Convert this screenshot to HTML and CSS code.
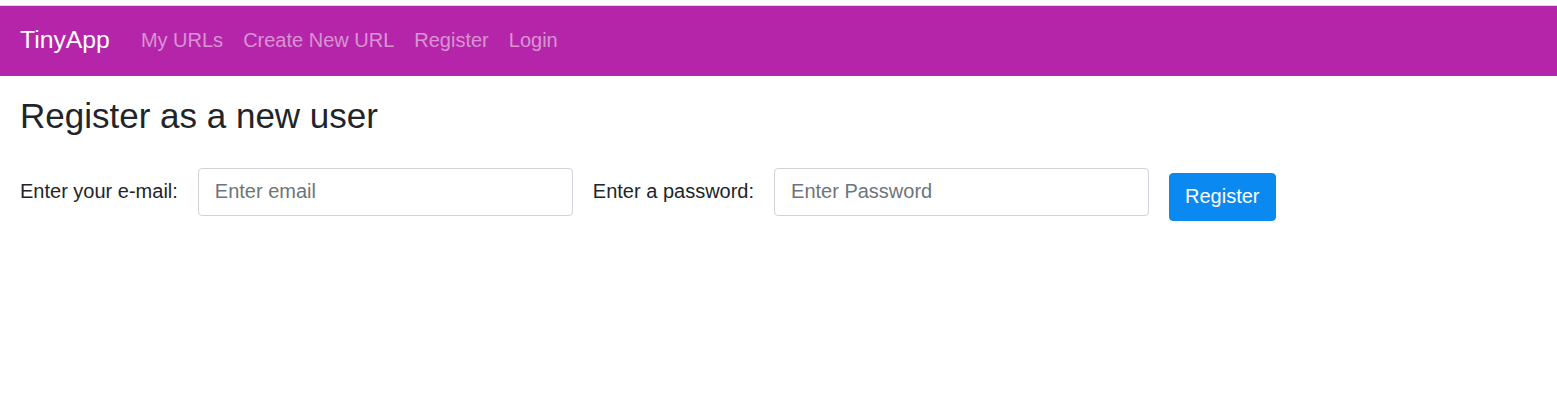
FILE: index.html
```html
<!DOCTYPE html>
<html lang="en">
<head>
<meta charset="utf-8">
<title>TinyApp</title>
<link rel="stylesheet" href="styles.css">
</head>
<body>
<nav class="navbar">
  <a class="brand" href="#">TinyApp</a>
  <ul class="nav">
    <li><a class="nav-link" href="#">My URLs</a></li>
    <li><a class="nav-link" href="#">Create New URL</a></li>
    <li><a class="nav-link" href="#">Register</a></li>
    <li><a class="nav-link" href="#">Login</a></li>
  </ul>
</nav>
<main class="content">
  <h2 class="title">Register as a new user</h2>
  <form class="form-inline">
    <label class="label" for="email">Enter your e-mail:</label>
    <input class="input" id="email" type="text" placeholder="Enter email">
    <label class="label" for="password">Enter a password:</label>
    <input class="input" id="password" type="password" placeholder="Enter Password">
    <button class="btn" type="button">Register</button>
  </form>
</main>
</body>
</html>
```

FILE: styles.css
```css
* { box-sizing: border-box; }
html, body {
  margin: 0;
  padding: 0;
  background: #fff;
}
body {
  font-family: "Liberation Sans", Arial, sans-serif;
  color: #212529;
  padding-top: 5px;
}
.navbar {
  display: flex;
  align-items: center;
  height: 71px;
  padding: 0 20px 2px;
  background: #b425aa;
  border-top: 1px solid #d9d9d9;
}
.brand {
  font-size: 24.75px;
  line-height: 30px;
  color: #fff;
  text-decoration: none;
  margin-right: 21px;
}
.nav {
  display: flex;
  list-style: none;
  margin: 0;
  padding: 0;
}
.nav-link {
  display: block;
  font-size: 20px;
  line-height: 30px;
  padding: 0 10px;
  color: rgba(255, 255, 255, 0.5);
  text-decoration: none;
}
.content {
  padding: 0 20px;
}
.title {
  font-size: 35px;
  font-weight: 400;
  line-height: 42px;
  margin: 19px 0 31px;
}
.form-inline {
  display: flex;
  align-items: flex-start;
}
.label {
  font-size: 20px;
  line-height: 30px;
  margin: 8px 20px 0 0;
}
.input {
  width: 375px;
  height: 48px;
  padding: 7px 16px 9px;
  font-family: inherit;
  font-size: 20px;
  line-height: 30px;
  color: #495057;
  border: 1px solid #ced4da;
  border-radius: 4px;
  margin-right: 20px;
}
.input::placeholder {
  color: #6c757d;
  opacity: 1;
}
.btn {
  margin-top: 5px;
  height: 48px;
  padding: 7px 15px 9px;
  font-family: inherit;
  font-size: 20px;
  line-height: 30px;
  color: #fff;
  background: #0a8af0;
  border: 1px solid #0a8af0;
  border-radius: 4px;
}
```
